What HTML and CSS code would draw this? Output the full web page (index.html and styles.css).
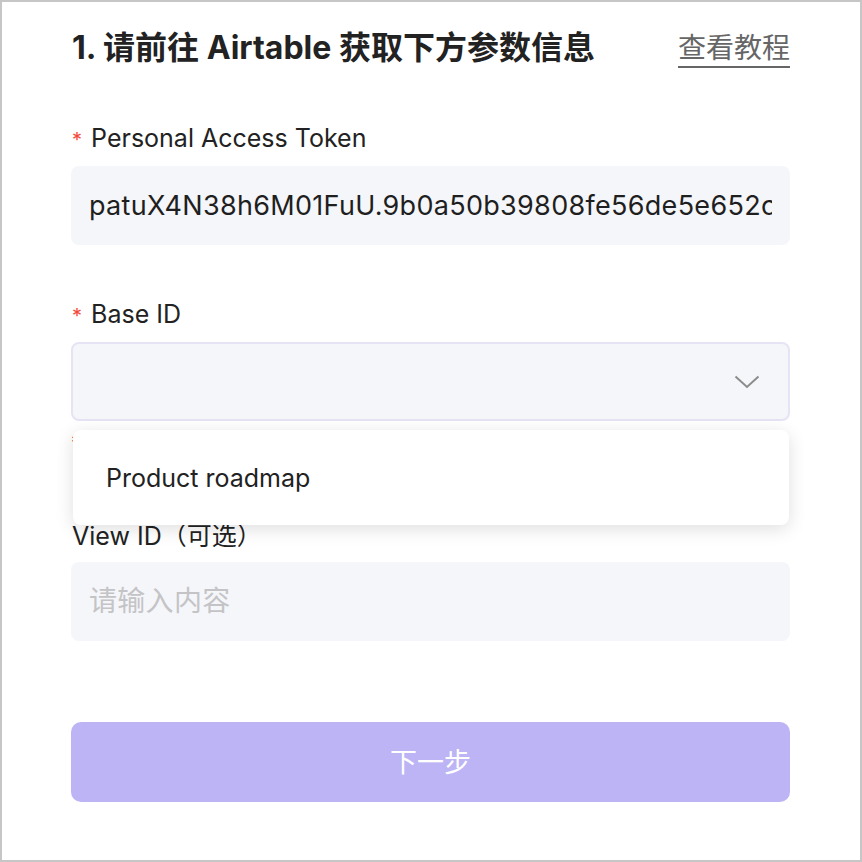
FILE: index.html
```html
<!DOCTYPE html>
<html lang="zh-CN">
<head>
    <meta charset="UTF-8">
    <meta name="viewport" content="width=device-width, initial-scale=1.0">
    <title>Airtable 参数</title>
    <link rel="stylesheet" href="styles.css">
</head>
<body>

<div class="frame">
    <div class="header">
        <h1>1. 请前往 Airtable 获取下方参数信息</h1>
        <a class="guide" href="#">查看教程</a>
    </div>

    <form class="form">
        <div class="field">
            <label><span class="req">*</span> Personal Access Token</label>
            <input type="text" class="input" value="patuX4N38h6M01FuU.9b0a50b39808fe56de5e652c4e1a9">
        </div>

        <div class="field field-error">
            <label><span class="req">*</span> Base ID</label>
            <div class="select-wrap">
                <div class="select">
                    <svg class="chevron" width="26" height="14" viewBox="0 0 26 14">
                        <path d="M1.5 1.5 L13 12 L24.5 1.5" fill="none" stroke="#8c8c8c" stroke-width="2"/>
                    </svg>
                </div>
                <div class="dropdown">
                    <div class="option">Product roadmap</div>
                </div>
            </div>
            <div class="error">* 请选择 Base ID</div>
        </div>

        <div class="field">
            <label>View ID（可选）</label>
            <input type="text" class="input" placeholder="请输入内容">
        </div>

        <button type="button" class="next">下一步</button>
    </form>
</div>

</body>
</html>
```

FILE: styles.css
```css
body {
    margin: 0;
    font-family: Inter, "Noto Sans CJK SC", sans-serif;
    background: #fff;
    color: #222;
}
.frame {
    width: 862px;
    height: 862px;
    box-sizing: border-box;
    border: 2px solid #c6c6c6;
    padding: 26px 70px 0 69px;
}
.header {
    display: flex;
    justify-content: space-between;
    align-items: center;
    height: 40px;
}
h1 {
    margin: 0;
    font-size: 32px;
    font-weight: 700;
    color: #222;
    line-height: 40px;
    padding-left: 1px;
}
.guide {
    font-size: 28px;
    color: #666;
    text-decoration: none;
    border-bottom: 2px solid #666;
    line-height: 36px;
    margin-top: 2px;
}
.form {
    display: flex;
    flex-direction: column;
    margin-top: 53px;
}
.field {
    display: flex;
    flex-direction: column;
    margin-bottom: 52px;
}
.field-error {
    margin-bottom: 98px;
}
label {
    font-size: 25px;
    line-height: 34px;
    margin-bottom: 9px;
    padding-left: 1px;
    color: #222;
}
.req {
    color: #f5483b;
    font-size: 20px;
    margin-right: 2px;
}
.input {
    height: 79px;
    box-sizing: border-box;
    border: none;
    border-radius: 8px;
    background: #f5f6fa;
    padding: 0 18px;
    font-family: Inter, "Noto Sans CJK SC", sans-serif;
    font-size: 27px;
    letter-spacing: 0.3px;
    color: #1f1f1f;
    outline: none;
}
.input::placeholder {
    color: #c4c4c6;
    font-size: 28px;
}
.select-wrap {
    position: relative;
}
.select {
    height: 79px;
    box-sizing: border-box;
    border: 2px solid #e6e4f4;
    border-radius: 8px;
    background: #f5f6fa;
    display: flex;
    align-items: center;
    justify-content: flex-end;
    padding-right: 28px;
}
.chevron {
    display: block;
}
.dropdown {
    position: absolute;
    top: 88px;
    left: 2px;
    right: 1px;
    height: 95px;
    background: #fff;
    border-radius: 8px;
    box-shadow: 0 4px 18px rgba(0, 0, 0, 0.13);
    display: flex;
    align-items: center;
    z-index: 2;
}
.option {
    padding-left: 33px;
    font-size: 25px;
    color: #222;
}
.error {
    color: #f5483b;
    font-size: 20px;
    line-height: 44px;
    height: 44px;
    margin-bottom: -44px;
}
.next {
    margin-top: 29px;
    height: 80px;
    border: none;
    border-radius: 10px;
    background: #bdb4f6;
    color: #fff;
    font-family: Inter, "Noto Sans CJK SC", sans-serif;
    font-size: 27px;
    padding: 0 0 3px 0;
}
```
